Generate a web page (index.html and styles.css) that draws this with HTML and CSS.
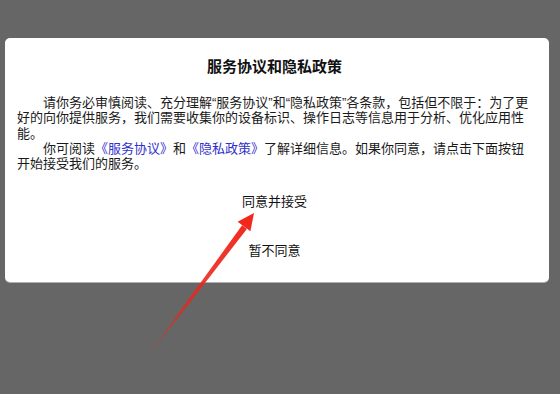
FILE: index.html
```html
<!DOCTYPE html>
<html lang="zh-CN">
  <head>
    <meta charset="UTF-8" />
    <title>服务协议和隐私政策</title>
    <link rel="stylesheet" href="styles.css">
  </head>
  <body>
    <div class="dialog">
      <h2 class="dialog-title">服务协议和隐私政策</h2>
      <div class="dialog-text">
        <p>请你务必审慎阅读、充分理解“服务协议”和“隐私政策”各条款，包括但不限于：为了更好的向你提供服务，我们需要收集你的设备标识、操作日志等信息用于分析、优化应用性能。</p>
        <p>你可阅读<a href="#">《服务协议》</a>和<a href="#">《隐私政策》</a>了解详细信息。如果你同意，请点击下面按钮开始接受我们的服务。</p>
      </div>
      <div class="dialog-btn">同意并接受</div>
      <div class="dialog-btn">暂不同意</div>
    </div>
    <svg class="arrow" width="560" height="394" viewBox="0 0 560 394">
      <defs>
        <linearGradient id="arrowFade" gradientUnits="userSpaceOnUse" x1="148" y1="356" x2="254" y2="213">
          <stop offset="0" stop-color="#e8261c" stop-opacity="0"/>
          <stop offset="0.35" stop-color="#e8261c" stop-opacity="0.85"/>
          <stop offset="1" stop-color="#f2281c"/>
        </linearGradient>
      </defs>
      <polygon points="148.3,356.2 147.7,355.8 242.1,225.3 246.9,228.9" fill="url(#arrowFade)"/>
      <polygon points="254,213 250.4,231.3 237.6,221.7" fill="#f2281c"/>
    </svg>
  </body>
</html>
```

FILE: styles.css
```css
body {
   margin: 0;
   padding: 38px 11px 0 5px;
   background-color: #666666;
   font-family: "Liberation Sans", "Noto Sans CJK SC", sans-serif;
   color: #1a1a1a;
   height: 394px;
   box-sizing: border-box;
   overflow: hidden;
}
.dialog {
   background-color: white;
   border-radius: 5px;
   box-shadow: 0 1px 0 #b0b0b0;
   padding: 17px 17px 7px 12px;
}
.dialog-title {
   margin: 0 0 16px;
   font-size: 15px;
   line-height: 24px;
   font-weight: bold;
   text-align: center;
   color: #111;
}
.dialog-text p {
   margin: 0;
   font-size: 13px;
   line-height: 15.3px;
   text-indent: 2em;
}
.dialog-text a {
   color: #3030cc;
   text-decoration: none;
}
.dialog-text {
   margin-bottom: 6px;
}
.dialog-btn {
   height: 49px;
   line-height: 49px;
   font-size: 13px;
   text-align: center;
   color: #111;
}
.arrow {
   position: absolute;
   left: 0;
   top: 0;
   pointer-events: none;
}
```
